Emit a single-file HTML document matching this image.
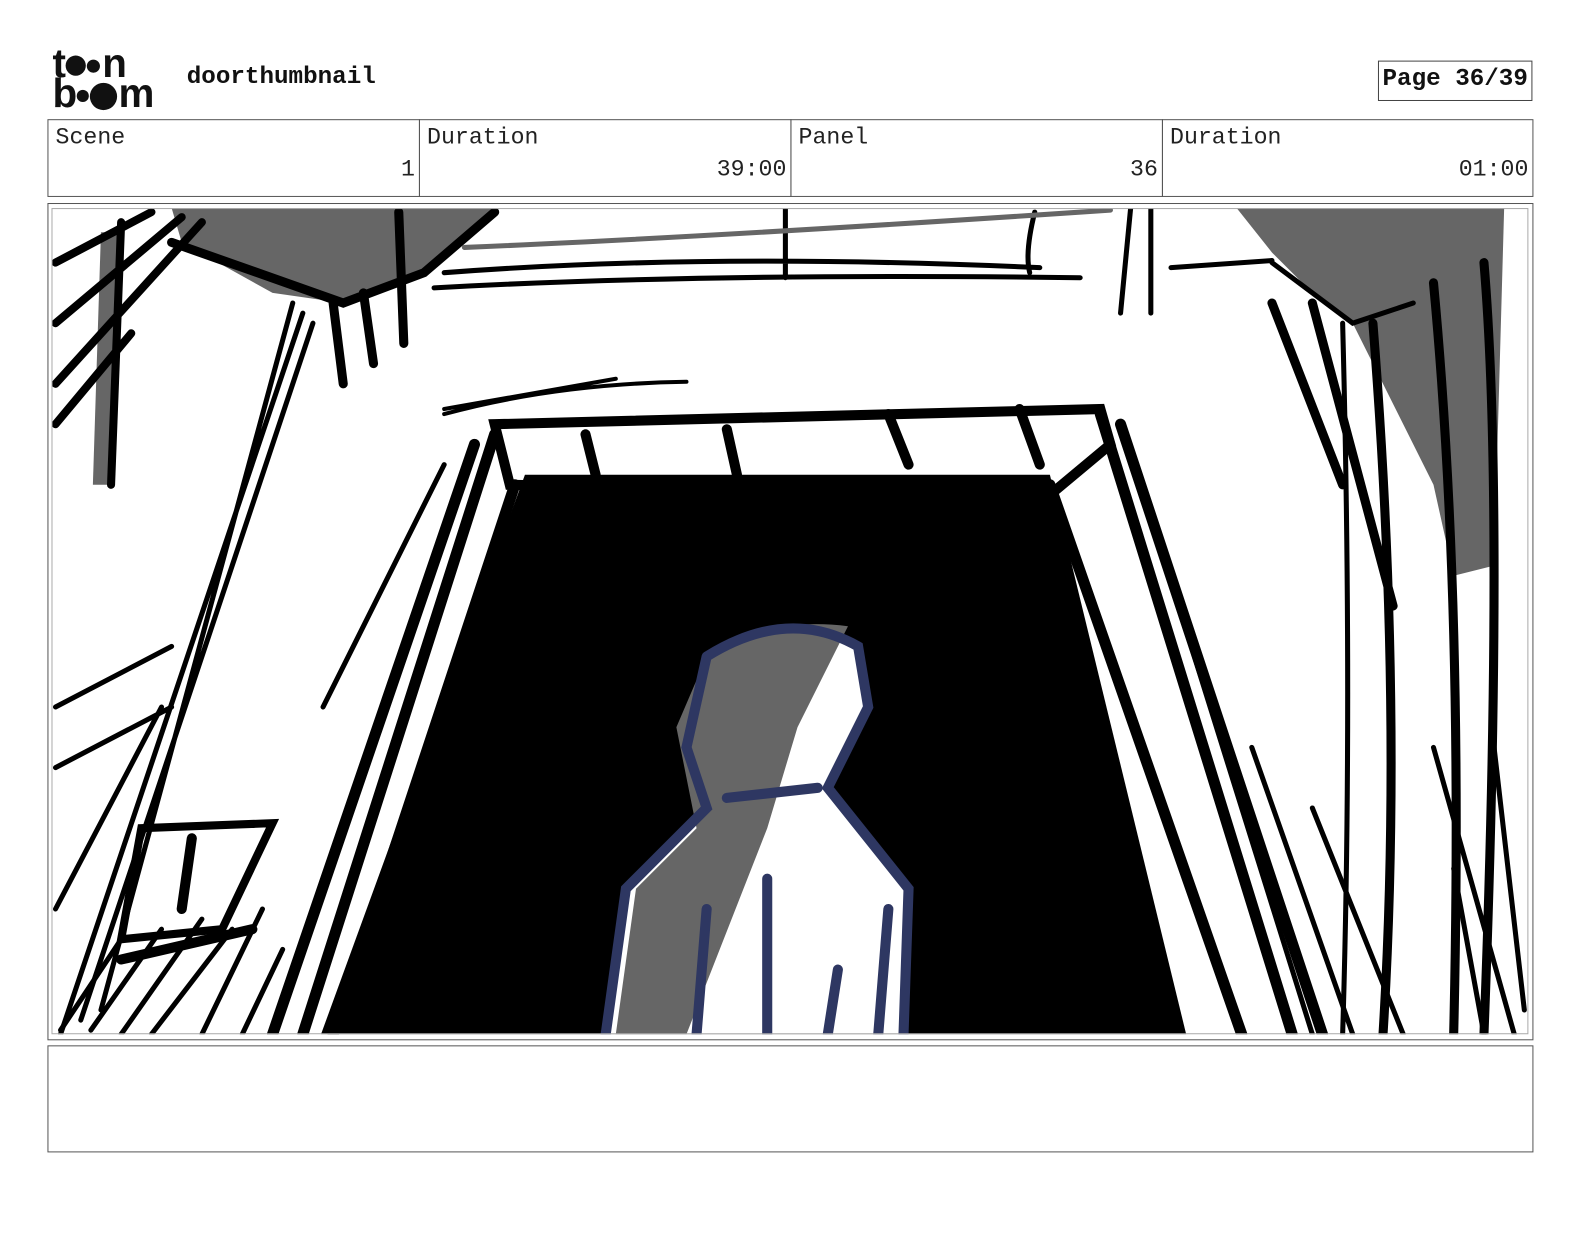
<!DOCTYPE html>
<html><head><style>
body{margin:0;width:1584px;height:1224px;background:#fff;overflow:hidden;font-family:"Liberation Mono",monospace;color:#222}
#w{position:absolute;left:0;top:0;width:1584px;height:1224px;transform:scale(1.0095,1.01);transform-origin:0 0}
.a{position:absolute}
.cell{position:absolute;top:118px;height:77px;border:1px solid #555;box-sizing:border-box;font-size:23px}
.cell .l{position:absolute;left:7px;top:4px}
.cell .v{position:absolute;right:4px;top:36px}
.d{display:inline-block;border-radius:50%;background:#111;vertical-align:middle}
</style></head><body><div id="w">
<div class="a" style="left:52px;top:48px;font:bold 40px/30px 'Liberation Sans',sans-serif;color:#111;letter-spacing:-1px">
<div>t<span class="d" style="width:20px;height:20px;margin:0 1px"></span><span class="d" style="width:13px;height:13px;margin-right:2px"></span>n</div>
<div>b<span class="d" style="width:12px;height:12px;margin:0 1px"></span><span class="d" style="width:27px;height:27px;margin-right:1px"></span>m</div></div>
<div class="a" style="left:185px;top:63px;font-size:24px;font-weight:bold;color:#111">doorthumbnail</div>
<div class="a" style="left:1365px;top:60px;width:153px;height:40px;border:1px solid #444;box-sizing:border-box;font-size:24px;font-weight:bold;text-align:center;line-height:36px;color:#111">Page 36/39</div>
<div class="cell" style="left:47px;width:369px"><span class="l">Scene</span><span class="v">1</span></div>
<div class="cell" style="left:415px;width:369px"><span class="l">Duration</span><span class="v">39:00</span></div>
<div class="cell" style="left:783px;width:369px"><span class="l">Panel</span><span class="v">36</span></div>
<div class="cell" style="left:1151px;width:368px"><span class="l">Duration</span><span class="v">01:00</span></div>
<div class="a" style="left:47px;top:201px;width:1472px;height:829px;border:1px solid #555;box-sizing:border-box"></div>
<svg class="a" style="left:51px;top:206px" width="1463" height="818" viewBox="51 206 1463 818">
<rect x="51" y="206" width="1463" height="818" fill="#fff"/>
<path d="M170 206 L490 206 L420 270 L340 300 L270 290 L180 240 Z" fill="#666"/>
<path d="M100 230 L118 230 L112 480 L92 480 Z" fill="#666"/>
<path d="M1225 206 L1490 206 L1480 560 L1440 570 L1420 480 L1340 320 L1300 290 L1260 250 Z" fill="#666"/>
<path d="M520 470 L1040 470 L1175 1024 L318 1024 Z" fill="#000"/>
<g stroke="#000" fill="none" stroke-linecap="round">
<path d="M170 240 L340 300 L420 270 L490 210 M330 300 L340 380 M360 290 L370 360 M395 210 L400 340" stroke-width="9"/>
<path d="M55 260 L150 210 M55 320 L180 215 M55 380 L200 220 M55 420 L130 330 M120 220 L110 480" stroke-width="8"/>
<path d="M430 285 Q700 270 1070 275 M440 270 Q700 250 1030 265 M778 206 L778 275 M1025 210 Q1015 250 1020 270 M1120 206 L1110 310 M1140 206 L1140 310 M1160 265 L1260 258 M1260 260 L1300 290 L1340 320 L1400 300 M1330 320 Q1340 700 1330 1024" stroke-width="5"/>
<path d="M1300 300 L1380 600 M1360 320 Q1390 700 1370 1024 M1420 280 Q1450 600 1440 1024 M1470 260 Q1490 500 1470 1024 M1260 300 L1330 480" stroke-width="9"/>
<path d="M460 245 Q700 235 1100 208" stroke="#666" stroke-width="5"/>
<path d="M440 410 Q550 380 680 378 M440 405 L610 375" stroke-width="4"/>
<path d="M490 420 L1090 405 L1100 440 L1040 490 L505 480 Z" stroke-width="10"/>
<path d="M580 430 L590 470 M720 425 L730 470 M880 410 L900 460 M1010 405 L1030 460" stroke-width="10"/>
<path d="M490 430 L300 1024 M470 440 L270 1024 M510 480 L330 1024 M1090 410 L1280 1024 M1110 420 L1310 1024 M1040 480 L1230 1024" stroke-width="11"/>
<path d="M60 1024 L300 310 M80 1010 L310 320 M100 1000 L290 300 M320 700 L440 460 M1180 640 L1300 1024 M1240 740 L1340 1024 M1300 800 L1390 1024 M1420 740 L1500 1024 M1480 740 L1510 1000 M1440 860 L1470 1024" stroke-width="5"/>
<path d="M55 700 L170 640 M55 760 L170 700 M55 900 L160 700 M60 1020 L120 930 M90 1020 L160 920 M120 1024 L200 910 M150 1024 L230 920 M200 1024 L260 900 M240 1024 L280 940" stroke-width="5"/>
<path d="M140 820 L270 815 L220 920 L120 930 Z" stroke-width="8"/>
<path d="M190 830 L180 900 M120 950 L250 920" stroke-width="10"/>
</g>
<path d="M700 650 Q780 600 850 640 L860 700 L820 780 L900 880 L895 1024 L600 1024 L620 880 L700 800 L680 740 Z" fill="#fff"/>
<path d="M700 650 Q760 610 840 620 L790 720 L760 820 L680 1024 L610 1024 L630 880 L690 820 L670 720 Z" fill="#666"/>
<path d="M700 650 Q780 600 850 640 L860 700 L820 780 L900 880 L895 1024 M700 650 L680 740 L700 800 L620 880 L600 1024 M720 790 L810 780 M760 870 L760 1024 M690 1024 L700 900 M820 1024 L830 960 M870 1024 L880 900" fill="none" stroke="#2e3762" stroke-width="10" stroke-linecap="round"/>
</svg>
<div class="a" style="left:51px;top:206px;width:1463px;height:818px;border:1px solid #aaa;box-sizing:border-box"></div>
<div class="a" style="left:47px;top:1035px;width:1472px;height:106px;border:1px solid #555;box-sizing:border-box"></div>
</div></body></html>
